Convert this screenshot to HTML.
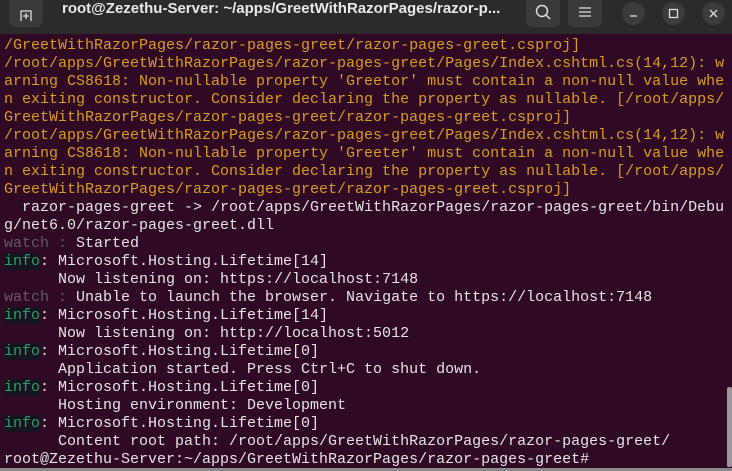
<!DOCTYPE html>
<html><head><meta charset="utf-8"><style>
html,body{margin:0;padding:0;width:732px;height:471px;overflow:hidden;background:#300a24}
.tb{position:absolute;left:0;top:0;width:732px;height:34px;background:#2b2b2b}
.title{position:absolute;left:62px;top:0;height:24px;line-height:24px;font:bold 15px "Liberation Sans",sans-serif;color:#e8e8e8;white-space:nowrap}
.btn{position:absolute;top:0;height:27px;width:34px;background:#3a3a3a;border-radius:0 0 6px 6px}
.circ{position:absolute;top:2px;width:23px;height:23px;border-radius:50%;background:#3c3c3c}
.term{position:absolute;left:4px;top:37px;font:15px/18px "Liberation Mono",monospace;color:#e4e4e4;white-space:pre}
.o{color:#d99b1e}.g{color:#26a269;background:#171421}.w{color:#5e5c64}
.sb{position:absolute;left:727px;top:387px;width:5px;height:80px;background:#9a9a9a;border-radius:2px}
.bl{position:absolute;left:0;top:468px;width:732px;height:3px;background:#8a8a8a}
</style></head><body>
<div class="tb">
<div class="btn" style="left:9px;width:34px"><svg width="34" height="27"><path d="M12 21V11h10v10" fill="none" stroke="#ddd" stroke-width="1.3"/><path d="M17 13v6M14 16h6" stroke="#ddd" stroke-width="1.3"/></svg></div>
<div class="title">root@Zezethu-Server: ~/apps/GreetWithRazorPages/razor-p...</div>
<div class="btn" style="left:526px"><svg width="34" height="27"><circle cx="16" cy="11" r="5.5" fill="none" stroke="#ddd" stroke-width="1.5"/><path d="M20 15l4 4" stroke="#ddd" stroke-width="1.5"/></svg></div>
<div class="btn" style="left:568px"><svg width="34" height="27"><path d="M11 8h12M11 12h12M11 16h12" stroke="#ddd" stroke-width="1.2"/></svg></div>
<div class="circ" style="left:256px;left:256px;display:none"></div>
<div class="circ" style="left:256px;display:none"></div>
<div class="circ" style="left:256px;display:none"></div>
<div class="circ" style="left:256px;display:none"></div>
<div class="circ" style="left:256px;display:none"></div>
<div class="circ" style="left:256px;display:none"></div>
<div class="circ" style="left:256px;display:none"></div>
<div class="circ" style="left:256px;display:none"></div>
<div class="circ" style="left:256px;display:none"></div>
<div class="circ" style="left:256px;display:none"></div>
<div class="circ" style="left:256px;display:none"></div>
<div class="circ" style="left:256px;display:none"></div>
<div class="circ" style="left:256px;display:none"></div>
<div class="circ" style="left:256px;display:none"></div>
<div class="circ" style="left:256px;display:none"></div>
<div class="circ" style="left:256px;display:none"></div>
<div class="circ" style="left:256px;display:none"></div>
<div class="circ" style="left:256px;display:none"></div>
<div class="circ" style="left:256px;display:none"></div>
<div class="circ" style="left:256px;display:none"></div>
<div class="circ" style="left:256px;display:none"></div>
<div class="circ" style="left:256px;display:none"></div>
<div class="circ" style="left:622px"><svg width="23" height="23"><path d="M8 14h7" stroke="#ddd" stroke-width="1.3"/></svg></div>
<div class="circ" style="left:662px"><svg width="23" height="23"><rect x="7.5" y="7.5" width="8" height="8" fill="none" stroke="#ddd" stroke-width="1.3"/></svg></div>
<div class="circ" style="left:702px"><svg width="23" height="23"><path d="M8 8l7 7M15 8l-7 7" stroke="#ddd" stroke-width="1.3"/></svg></div>
</div>
<div class="term"><span class="o">/GreetWithRazorPages/razor-pages-greet/razor-pages-greet.csproj]
/root/apps/GreetWithRazorPages/razor-pages-greet/Pages/Index.cshtml.cs(14,12): w
arning CS8618: Non-nullable property 'Greetor' must contain a non-null value whe
n exiting constructor. Consider declaring the property as nullable. [/root/apps/
GreetWithRazorPages/razor-pages-greet/razor-pages-greet.csproj]
/root/apps/GreetWithRazorPages/razor-pages-greet/Pages/Index.cshtml.cs(14,12): w
arning CS8618: Non-nullable property 'Greeter' must contain a non-null value whe
n exiting constructor. Consider declaring the property as nullable. [/root/apps/
GreetWithRazorPages/razor-pages-greet/razor-pages-greet.csproj]</span>
  razor-pages-greet -&gt; /root/apps/GreetWithRazorPages/razor-pages-greet/bin/Debu
g/net6.0/razor-pages-greet.dll
<span class="w">watch :</span> Started
<span class="g">info</span>: Microsoft.Hosting.Lifetime[14]
      Now listening on: https://localhost:7148
<span class="w">watch :</span> Unable to launch the browser. Navigate to https://localhost:7148
<span class="g">info</span>: Microsoft.Hosting.Lifetime[14]
      Now listening on: http://localhost:5012
<span class="g">info</span>: Microsoft.Hosting.Lifetime[0]
      Application started. Press Ctrl+C to shut down.
<span class="g">info</span>: Microsoft.Hosting.Lifetime[0]
      Hosting environment: Development
<span class="g">info</span>: Microsoft.Hosting.Lifetime[0]
      Content root path: /root/apps/GreetWithRazorPages/razor-pages-greet/
root@Zezethu-Server:~/apps/GreetWithRazorPages/razor-pages-greet#</div>
<div class="sb"></div>
<div class="bl"></div>
</body></html>
